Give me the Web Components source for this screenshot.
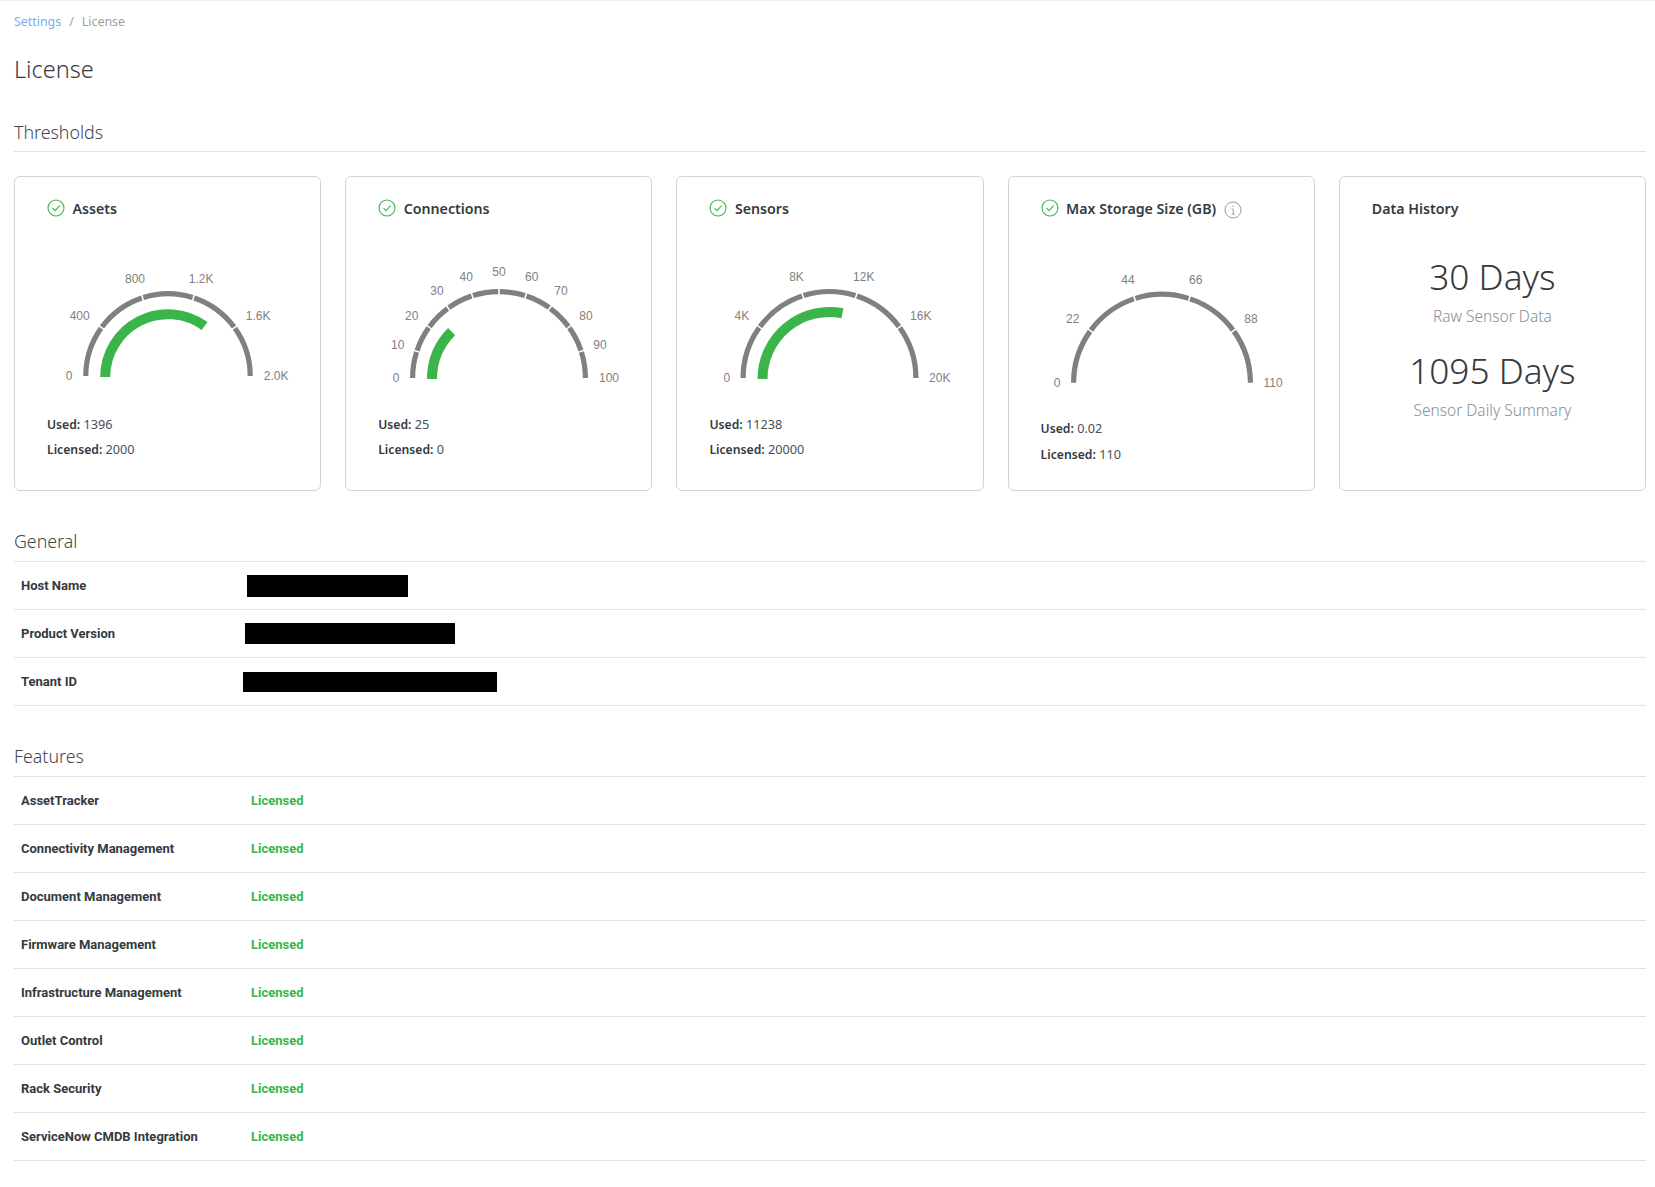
<!DOCTYPE html>
<html>
<head>
<meta charset="utf-8">
<title>License</title>
<style>
  html, body { margin: 0; background: #fff; }
  body { font-family: "Noto Sans", sans-serif; color: #343a40; }
</style>
</head>
<body>
<license-page>
  <lic-section heading="Thresholds">
    <div style="display:grid;grid-template-columns:repeat(5,minmax(0,1fr));gap:24px;margin-top:24px">
      <gauge-card heading="Assets" used="1396" licensed="2000" max="2000" cx="154" cy="199" r="84.8"
        ticks='[["0",-99,0.5],["400",-88.3,-59.5],["800",-33,-96.5],["1.2K",33.2,-96.5],["1.6K",90.2,-59.5],["2.0K",108.2,0.5]]'></gauge-card>
      <gauge-card heading="Connections" used="25" licensed="0" max="100" cx="154" cy="201" r="89"
        ticks='[["0",-103,0.7],["10",-101.3,-32.3],["20",-87.3,-61.3],["30",-62,-86.3],["40",-32.7,-100.3],["50",0,-105.3],["60",32.7,-100.3],["70",62,-86.3],["80",87,-61.3],["90",101,-32.3],["100",110,0.7]]'></gauge-card>
      <gauge-card heading="Sensors" used="11238" licensed="20000" max="20000" cx="153.5" cy="201" r="89"
        ticks='[["0",-102.7,0.7],["4K",-87.7,-61.3],["8K",-33,-100.3],["12K",34.3,-100.3],["16K",91.3,-61.3],["20K",110.3,0.7]]'></gauge-card>
      <gauge-card heading="Max Storage Size (GB)" info used="0.02" licensed="110" max="110" cx="154" cy="205.7" r="91" tall no-fill
        ticks='[["0",-105,1],["22",-89.3,-63],["44",-34,-102],["66",33.7,-102],["88",89,-63],["110",111,1]]'></gauge-card>
      <history-card heading="Data History">
        <history-stat value="30 Days" label="Raw Sensor Data"></history-stat>
        <history-stat value="1095 Days" label="Sensor Daily Summary"></history-stat>
      </history-card>
    </div>
  </lic-section>
  <lic-section heading="General">
    <lic-row label="Host Name"><redact-bar style="width:161px;height:22px;margin-left:-4px"></redact-bar></lic-row>
    <lic-row label="Product Version"><redact-bar style="width:210px;height:21px;margin-left:-6px"></redact-bar></lic-row>
    <lic-row label="Tenant ID"><redact-bar style="width:254px;height:20px;margin-left:-8px"></redact-bar></lic-row>
  </lic-section>
  <lic-section heading="Features">
    <lic-row label="AssetTracker" licensed></lic-row>
    <lic-row label="Connectivity Management" licensed></lic-row>
    <lic-row label="Document Management" licensed></lic-row>
    <lic-row label="Firmware Management" licensed></lic-row>
    <lic-row label="Infrastructure Management" licensed></lic-row>
    <lic-row label="Outlet Control" licensed></lic-row>
    <lic-row label="Rack Security" licensed></lic-row>
    <lic-row label="ServiceNow CMDB Integration" licensed></lic-row>
  </lic-section>
</license-page>

<script>
const CHECK_ICON = `
  <svg width="18" height="18" viewBox="0 0 18 18" fill="none">
    <circle cx="9" cy="9" r="8" stroke="#3cb44b" stroke-width="1.1"/>
    <path d="M5.6 9.2l2.4 2.4 4.6-5" stroke="#3cb44b" stroke-width="1.1"/>
  </svg>`;

const INFO_ICON = `
  <svg width="18" height="18" viewBox="0 0 18 18" fill="none">
    <circle cx="9" cy="9" r="8" stroke="#8fa0b3" stroke-width="1"/>
    <path d="M9 4.6v1.4M7.6 8h1.7v5M7.4 13.2h3.4" stroke="#8fa0b3" stroke-width="1"/>
  </svg>`;

class LicensePage extends HTMLElement {
    constructor() {
        super();
        this.attachShadow({ mode: 'open' });
        this.shadowRoot.innerHTML = `
            <style>
                :host { display: block; padding: 0 9px 40px 14px; border-top: 1px solid #efefef; }
                nav { height: 40px; display: flex; align-items: center; font-size: 12.4px; color: #9aa0a6; }
                nav a { color: #74aef5; text-decoration: none; }
                nav i { font-style: normal; margin: 0 8px; }
                h1 { margin: 10px 0 0; font-size: 23.5px; font-weight: 300; line-height: 36px; }
            </style>
            <nav><a>Settings</a><i>/</i><span>License</span></nav>
            <h1>License</h1>
            <slot></slot>
        `;
    }
}

class LicSection extends HTMLElement {
    constructor() {
        super();
        this.attachShadow({ mode: 'open' });
        this.shadowRoot.innerHTML = `
            <style>
                :host { display: block; margin-top: 33px; }
                :host(:first-of-type) { margin-top: 27px; }
                h2 { margin: 0; height: 37px; line-height: 35px; font-size: 17.8px; font-weight: 300; color: #3f464c; border-bottom: 1px solid #e3e3e3; }
                :host(:first-of-type) h2 { line-height: 36px; }
            </style>
            <h2>${this.getAttribute('heading')}</h2>
            <slot></slot>
        `;
    }
}

class LicRow extends HTMLElement {
    constructor() {
        super();
        this.attachShadow({ mode: 'open' });
        const status = this.hasAttribute('licensed') ? '<span class="ok">Licensed</span>' : '';
        this.shadowRoot.innerHTML = `
            <style>
                :host { display: flex; align-items: center; height: 47px; border-bottom: 1px solid #e3e3e3;
                        font: 700 13px Roboto, sans-serif; color: #343a40; }
                .label { width: 237px; padding-left: 7px; box-sizing: border-box; }
                .ok { color: #3cb44b; }
            </style>
            <div class="label">${this.getAttribute('label')}</div>
            <div>${status}<slot></slot></div>
        `;
    }
}

class RedactBar extends HTMLElement {
    constructor() {
        super();
        this.attachShadow({ mode: 'open' });
        this.shadowRoot.innerHTML = `<style>:host { display: block; background: #000; }</style>`;
    }
}

class GaugeCard extends HTMLElement {
    constructor() {
        super();
        this.attachShadow({ mode: 'open' });
        this.render();
    }

    // point on the half circle, fraction 0 is the left end, 1 the right end
    point(cx, cy, r, f) {
        const a = Math.PI * (1 - f);
        return `${(cx + r * Math.cos(a)).toFixed(2)} ${(cy - r * Math.sin(a)).toFixed(2)}`;
    }

    arc(cx, cy, r, from, to) {
        return `M${this.point(cx, cy, r, from)}A${r} ${r} 0 0 1 ${this.point(cx, cy, r, to)}`;
    }

    render() {
        const cx = +this.getAttribute('cx');
        const cy = +this.getAttribute('cy');
        const r = +this.getAttribute('r');
        const ticks = JSON.parse(this.getAttribute('ticks'));
        const used = +this.getAttribute('used');
        const max = +this.getAttribute('max');
        const tall = this.hasAttribute('tall');
        const segments = ticks.length - 1;
        const gap = 0.8 / (Math.PI * r); // white notch between segments

        let paths = '';
        for (let i = 0; i < segments; i++) {
            const from = i === 0 ? 0 : i / segments + gap;
            const to = i === segments - 1 ? 1 : (i + 1) / segments - gap;
            paths += `<path d="${this.arc(cx, cy, r - 2.6, from, to)}" stroke="#808080" stroke-width="5.2" fill="none"/>`;
        }
        if (!this.hasAttribute('no-fill')) {
            paths += `<path d="${this.arc(cx, cy + 1, r - 22, 0, used / max)}" stroke="#3bb54a" stroke-width="10" fill="none"/>`;
        }
        const labels = ticks.map(([t, dx, dy]) =>
            `<text x="${cx + dx}" y="${cy + dy + 3.5}" text-anchor="middle">${t}</text>`).join('');

        this.shadowRoot.innerHTML = `
            <style>
                :host { display: block; height: 315px; box-sizing: border-box; border: 1px solid #d4d4d4; border-radius: 6px; }
                header { display: flex; align-items: center; height: 62px; padding-left: 32px; font-size: 14.2px; font-weight: 600; color: #343a40; }
                header svg { flex: none; }
                .title { margin-left: 7.5px; }
                .info { margin: 3px 0 0 8px; display: flex; }
                svg.gauge { display: block; font: 12px "Liberation Sans", sans-serif; fill: #808080; margin-left: -1px; margin-top: -62px; }
                .stats { padding-left: 32px; font-size: 12.7px; line-height: 25px; color: #495057; margin-top: ${tall ? 5 : 1}px; }
                .stats div + div { margin-top: ${tall ? 1 : 0}px; }
                b { font-size: 12.2px; font-weight: 600; color: #343a40; }
            </style>
            <header>
                ${CHECK_ICON}
                <span class="title">${this.getAttribute('heading')}</span>
                ${this.hasAttribute('info') ? `<span class="info">${INFO_ICON}</span>` : ''}
            </header>
            <svg class="gauge" width="304" height="234">${paths}${labels}</svg>
            <div class="stats">
                <div><b>Used:</b> ${this.getAttribute('used')}</div>
                <div><b>Licensed:</b> ${this.getAttribute('licensed')}</div>
            </div>
        `;
    }
}

class HistoryCard extends HTMLElement {
    constructor() {
        super();
        this.attachShadow({ mode: 'open' });
        this.shadowRoot.innerHTML = `
            <style>
                :host { display: block; height: 315px; box-sizing: border-box; border: 1px solid #d4d4d4; border-radius: 6px; }
                header { display: flex; align-items: center; height: 62px; padding-left: 32px; margin-bottom: 14px; font-size: 14.2px; font-weight: 600; }
            </style>
            <header>${this.getAttribute('heading')}</header>
            <slot></slot>
        `;
    }
}

class HistoryStat extends HTMLElement {
    constructor() {
        super();
        this.attachShadow({ mode: 'open' });
        this.shadowRoot.innerHTML = `
            <style>
                :host { display: block; text-align: center; margin-bottom: 19.5px; }
                .v { font-size: 35.2px; font-weight: 300; line-height: 46px; color: #343a40; }
                .l { font-size: 15.5px; font-weight: 300; line-height: 24px; margin-top: 4.5px; color: #868e96; }
            </style>
            <div class="v">${this.getAttribute('value')}</div>
            <div class="l">${this.getAttribute('label')}</div>
        `;
    }
}

customElements.define('license-page', LicensePage);
customElements.define('lic-section', LicSection);
customElements.define('lic-row', LicRow);
customElements.define('redact-bar', RedactBar);
customElements.define('gauge-card', GaugeCard);
customElements.define('history-card', HistoryCard);
customElements.define('history-stat', HistoryStat);
</script>
</body>
</html>
